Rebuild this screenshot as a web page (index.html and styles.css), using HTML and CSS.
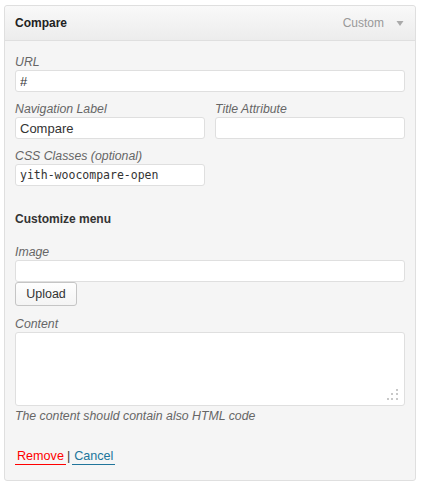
FILE: index.html
```html
<!DOCTYPE html>
<html>
<head>
<meta charset="utf-8">
<link rel="stylesheet" href="styles.css">
</head>
<body>
<div class="panel">
  <div class="panel-head">
    <span class="item-title">Compare</span>
    <span class="item-controls">
      <span class="item-type">Custom</span>
      <svg class="arrow" width="8" height="5" viewBox="0 0 8 5"><path d="M0.5 0H7.5L4 5Z" fill="#aaa"/></svg>
    </span>
  </div>
  <div class="panel-body">
    <div class="field">
      <label class="lbl">URL</label>
      <input class="txt" type="text" value="#">
    </div>
    <div class="field two">
      <div>
        <label class="lbl">Navigation Label</label>
        <input class="txt" type="text" value="Compare">
      </div>
      <div>
        <label class="lbl">Title Attribute</label>
        <input class="txt" type="text" value="">
      </div>
    </div>
    <div class="field half">
      <label class="lbl">CSS Classes (optional)</label>
      <input class="txt mono" type="text" value="yith-woocompare-open">
    </div>
    <h4 class="section">Customize menu</h4>
    <div class="field img-field">
      <label class="lbl">Image</label>
      <input class="txt" type="text" value="">
      <button class="btn" type="button">Upload</button>
    </div>
    <div class="field content-field">
      <label class="lbl">Content</label>
      <div class="area-wrap">
        <textarea class="area"></textarea>
        <svg class="grip" width="11" height="11" viewBox="0 0 11 11">
          <rect x="9" y="0" width="2" height="2" fill="#c8c8c8"/>
          <rect x="4" y="4" width="2" height="2" fill="#c8c8c8"/>
          <rect x="9" y="4" width="2" height="2" fill="#c8c8c8"/>
          <rect x="0" y="9" width="2" height="2" fill="#c8c8c8"/>
          <rect x="4" y="9" width="2" height="2" fill="#c8c8c8"/>
          <rect x="9" y="9" width="2" height="2" fill="#c8c8c8"/>
        </svg>
      </div>
      <p class="help">The content should contain also HTML code</p>
    </div>
    <div class="actions">
      <a class="remove" href="#">Remove</a><span class="sep">|</span><a class="cancel" href="#">Cancel</a>
    </div>
  </div>
</div>
</body>
</html>
```
FILE: styles.css
```css
html, body {
  margin: 0;
  padding: 0;
  background: #fff;
}
body {
  font-family: "Liberation Sans", Arial, sans-serif;
  font-size: 12px;
  color: #333;
}
.panel {
  box-sizing: border-box;
  margin: 5px 0 0 4px;
  width: 412px;
  border: 1px solid #dfdfdf;
  border-radius: 3px;
  background: #f5f5f5;
}
.panel-head {
  box-sizing: border-box;
  height: 35px;
  display: flex;
  align-items: center;
  justify-content: space-between;
  padding: 0 11px 0 10px;
  border-bottom: 1px solid #dfdfdf;
  background: linear-gradient(to bottom, #f9f9f9, #ececec);
  border-radius: 3px 3px 0 0;
}
.item-title {
  font-weight: bold;
  color: #222;
}
.item-controls {
  display: flex;
  align-items: center;
}
.item-type {
  color: #999;
  margin-right: 12px;
}
.arrow {
  display: block;
  margin-top: 1px;
}
.panel-body {
  padding: 13px 10px 15px;
}
.field {
  margin-bottom: 9px;
}
.field.two {
  display: grid;
  grid-template-columns: 190px 190px;
  column-gap: 10px;
}
.field.half .txt {
  width: 190px;
}
.lbl {
  display: block;
  font-style: italic;
  font-size: 12.3px;
  color: #666;
  line-height: 16px;
  height: 16px;
}
.txt {
  box-sizing: border-box;
  display: block;
  width: 100%;
  height: 22px;
  margin: 0;
  padding: 0 4px;
  border: 1px solid #dfdfdf;
  border-radius: 3px;
  background: #fff;
  font-family: "Liberation Sans", Arial, sans-serif;
  font-size: 13px;
  color: #333;
  outline: none;
}
.txt.mono {
  font-family: "DejaVu Sans Mono", monospace;
  font-size: 11.5px;
  padding-left: 4px;
}
.section {
  margin: 25px 0 17px;
  font-size: 12px;
  line-height: 16px;
  font-weight: bold;
  color: #333;
}
.btn {
  box-sizing: border-box;
  display: block;
  width: 62px;
  height: 24px;
  margin: 0;
  padding: 0;
  border: 1px solid #c5c5c5;
  border-radius: 3px;
  background: linear-gradient(to bottom, #fefefe, #f4f4f4);
  font-family: "Liberation Sans", Arial, sans-serif;
  font-size: 12.5px;
  color: #333;
}
.img-field {
  margin-bottom: 10px;
}
.area-wrap {
  position: relative;
}
.area {
  box-sizing: border-box;
  display: block;
  width: 100%;
  height: 74px;
  margin: 0;
  border: 1px solid #dfdfdf;
  border-radius: 3px;
  background: #fff;
  resize: none;
  outline: none;
}
.grip {
  position: absolute;
  right: 7px;
  bottom: 6px;
}
.help {
  margin: 2px 0 0;
  line-height: 16px;
  font-size: 12.3px;
  font-style: italic;
  color: #666;
}
.content-field {
  margin-bottom: 24px;
}
.actions {
  line-height: 16px;
  font-size: 12.6px;
  display: flex;
  align-items: flex-start;
}
.actions a {
  text-decoration: none;
  padding: 0 2px;
  border-bottom: 1px solid;
}
.remove {
  color: #f00;
  border-bottom-color: #f00;
}
.cancel {
  color: #21759b;
  border-bottom-color: #21759b;
}
.sep {
  color: #333;
  margin: 0 2px 0 1px;
}
```
